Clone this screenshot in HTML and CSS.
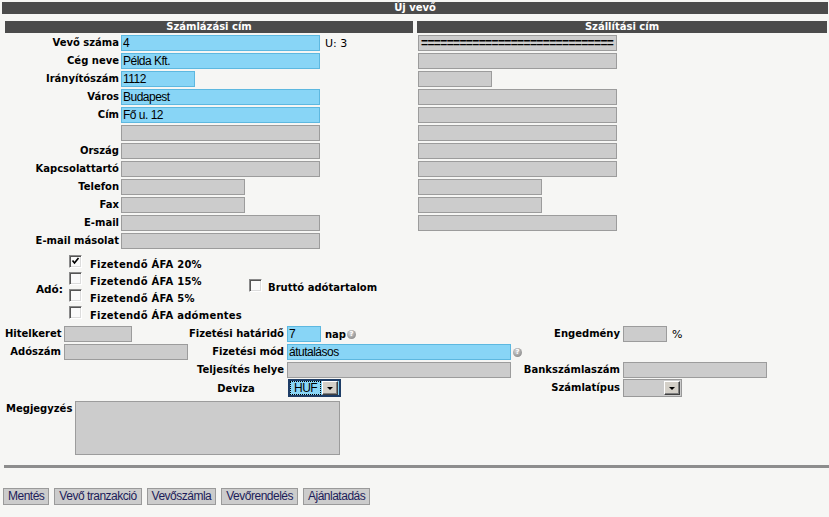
FILE: index.html
```html
<!DOCTYPE html>
<html lang="hu">
<head>
<meta charset="utf-8">
<title>Új vevő</title>
<link rel="stylesheet" href="styles.css">
</head>
<body>
<div class="titlebar">Új vevő</div>

<div class="addr">
  <div class="col">
    <div class="sechead">Számlázási cím</div>
    <div class="left">
      <label class="lbl">Vevő száma</label>
      <div class="fld"><input class="in blue w199" value="4"><span class="note">U: 3</span></div>
      <label class="lbl">Cég neve</label>
      <div class="fld"><input class="in blue w199" value="Példa Kft."></div>
      <label class="lbl">Irányítószám</label>
      <div class="fld"><input class="in blue w74" value="1112"></div>
      <label class="lbl">Város</label>
      <div class="fld"><input class="in blue w199" value="Budapest"></div>
      <label class="lbl">Cím</label>
      <div class="fld"><input class="in blue w199" value="Fő u. 12"></div>
      <label class="lbl"></label>
      <div class="fld"><input class="in w199" value=""></div>
      <label class="lbl">Ország</label>
      <div class="fld"><input class="in w199" value=""></div>
      <label class="lbl">Kapcsolattartó</label>
      <div class="fld"><input class="in w199" value=""></div>
      <label class="lbl">Telefon</label>
      <div class="fld"><input class="in w124" value=""></div>
      <label class="lbl">Fax</label>
      <div class="fld"><input class="in w124" value=""></div>
      <label class="lbl">E-mail</label>
      <div class="fld"><input class="in w199" value=""></div>
      <label class="lbl">E-mail másolat</label>
      <div class="fld"><input class="in w199" value=""></div>
    </div>
  </div>
  <div class="col">
    <div class="sechead">Szállítási cím</div>
    <div class="right">
      <input class="in w199 eq" value="==============================">
      <input class="in w199" value="">
      <input class="in w74" value="">
      <input class="in w199" value="">
      <input class="in w199" value="">
      <input class="in w199" value="">
      <input class="in w199" value="">
      <input class="in w199" value="">
      <input class="in w124" value="">
      <input class="in w124" value="">
      <input class="in w199" value="">
    </div>
  </div>
</div>

<div class="tax">
  <div class="ado">Adó:</div>
  <div class="cbcol">
    <div class="cbrow"><span class="cb"><svg width="11" height="11" viewBox="0 0 11 11"><path d="M2.5 4.5 L4.5 7 L8.5 2" fill="none" stroke="#000" stroke-width="1.7"/></svg></span><span class="cbtext">Fizetendő ÁFA 20%</span></div>
    <div class="cbrow"><span class="cb"></span><span class="cbtext">Fizetendő ÁFA 15%</span></div>
    <div class="cbrow"><span class="cb"></span><span class="cbtext">Fizetendő ÁFA 5%</span></div>
    <div class="cbrow"><span class="cb"></span><span class="cbtext">Fizetendő ÁFA adómentes</span></div>
  </div>
  <div class="brutto"><span class="cb"></span><span class="btext">Bruttó adótartalom</span></div>
</div>

<div class="terms">
  <label class="tl">Hitelkeret</label>
  <div class="fld"><input class="in w68" value=""></div>
  <label class="tl">Fizetési határidő</label>
  <div class="fld"><input class="in blue w34" value="7"><span class="nap">nap</span><span class="help">?</span></div>
  <label class="tl">Engedmény</label>
  <div class="fld"><input class="in w44" value=""><span class="pct">%</span></div>

  <label class="tl">Adószám</label>
  <div class="fld"><input class="in w124" value=""></div>
  <label class="tl">Fizetési mód</label>
  <div class="fld"><input class="in blue w224" value="átutalásos"><span class="help help2">?</span></div>
  <div></div>
  <div></div>

  <div></div>
  <div></div>
  <label class="tl">Teljesítés helye</label>
  <div class="fld"><input class="in w224" value=""></div>
  <label class="tl">Bankszámlaszám</label>
  <div class="fld"><input class="in w144" value=""></div>

  <div></div>
  <div></div>
  <label class="tl center">Deviza</label>
  <div class="fld">
    <div class="sel focus w53"><span class="val"><span class="dot">HUF</span></span><span class="arrow"><i></i></span></div>
  </div>
  <label class="tl">Számlatípus</label>
  <div class="fld">
    <div class="sel w59"><span class="val"></span><span class="arrow"><i></i></span></div>
  </div>
</div>

<div class="memo">
  <label class="mlbl">Megjegyzés</label>
  <textarea class="ta"></textarea>
</div>

<div class="rule"></div>

<div class="buttons">
  <button class="btn">Mentés</button>
  <button class="btn">Vevő tranzakció</button>
  <button class="btn">Vevőszámla</button>
  <button class="btn">Vevőrendelés</button>
  <button class="btn">Ajánlatadás</button>
</div>
</body>
</html>
```

FILE: styles.css
```css
* { box-sizing: border-box; }

body {
  margin: 0;
  width: 829px;
  height: 517px;
  overflow: hidden;
  background: #f6f6f4;
  font-family: "DejaVu Sans", Verdana, sans-serif;
  font-size: 10px;
  color: #000;
}

.titlebar {
  margin: 2px 1px 0 2px;
  height: 12px;
  line-height: 12px;
  background: #4b4b4b;
  color: #fff;
  font-weight: bold;
  text-align: center;
}

.addr {
  display: grid;
  grid-template-columns: 408px 410px;
  column-gap: 4px;
  margin: 7px 0 0 5px;
}

.sechead {
  height: 12px;
  line-height: 12px;
  margin-bottom: 2px;
  background: #4b4b4b;
  color: #fff;
  font-weight: bold;
  text-align: center;
}

.left {
  display: grid;
  grid-template-columns: 116px auto;
  grid-auto-rows: 16px;
  row-gap: 2px;
}

.lbl {
  font-weight: bold;
  text-align: right;
  padding-right: 2px;
  line-height: 16px;
  white-space: nowrap;
}

.fld {
  display: flex;
  align-items: center;
  height: 16px;
}

.right {
  display: flex;
  flex-direction: column;
  gap: 2px;
  padding-left: 1px;
}

.in {
  display: block;
  height: 16px;
  margin: 0;
  padding: 0 1px;
  border: 1px solid #9c9c9c;
  background: #cccccc;
  color: #000;
  font-family: "Liberation Sans", Arial, sans-serif;
  font-size: 12px;
  letter-spacing: -0.5px;
  outline: none;
}

.in.eq {
  padding-left: 2px;
  letter-spacing: -0.6px;
  font-weight: bold;
}

.in.blue {
  background: #88d5f6;
  border-color: #5db8e0;
}

.w34 { width: 34px; }
.w44 { width: 44px; }
.w68 { width: 68px; }
.w74 { width: 74px; }
.w124 { width: 124px; }
.w144 { width: 144px; }
.w199 { width: 199px; }
.w224 { width: 224px; }
.w53 { width: 53px; }
.w59 { width: 59px; }

.note {
  margin-left: 5px;
  font-size: 11px;
}

/* tax */
.tax {
  display: flex;
  align-items: center;
  margin: 6px 0 0 5px;
  height: 68px;
}

.ado {
  width: 58px;
  text-align: right;
  font-weight: bold;
  font-size: 10.5px;
}

.cbcol {
  margin-left: 6px;
  display: flex;
  flex-direction: column;
}

.cbrow {
  display: flex;
  align-items: flex-start;
  height: 17px;
}

.cb {
  display: block;
  flex: none;
  width: 13px;
  height: 13px;
  border: 1px solid;
  border-color: #8a8a8a #ffffff #ffffff #8a8a8a;
  box-shadow: inset 1px 1px 0 #555, inset -1px -1px 0 #dcdcdc;
  background: #fafafa;
}

.cb svg { display: block; margin: 0; }

.cbtext {
  margin: 4px 0 0 8px;
  line-height: 12px;
  font-weight: bold;
  letter-spacing: 0.25px;
  white-space: nowrap;
}

.brutto {
  display: flex;
  align-items: flex-start;
  align-self: flex-start;
  margin: 24px 0 0 7px;
}

.btext {
  margin: 3px 0 0 6px;
  line-height: 12px;
  font-weight: bold;
  white-space: nowrap;
}

/* terms grid */
.terms {
  display: grid;
  grid-template-columns: 59px 124px 99px 235px 101px auto;
  grid-template-rows: 16px 16px 16px 18px;
  row-gap: 2px;
  margin: 3px 0 0 5px;
}

.tl {
  font-weight: bold;
  text-align: right;
  padding-right: 3px;
  line-height: 16px;
  white-space: nowrap;
}

.tl.center {
  text-align: center;
  line-height: 18px;
}

.nap {
  margin-left: 4px;
  font-weight: bold;
}

.pct {
  margin-left: 5px;
  font-size: 11px;
}

.help {
  display: inline-block;
  width: 9px;
  height: 9px;
  margin-left: 1px;
  border-radius: 50%;
  background: radial-gradient(circle at 40% 35%, #d6d6d6, #8a8a8a 80%);
  color: #fff;
  font-size: 7px;
  font-weight: bold;
  line-height: 9px;
  text-align: center;
}

.help2 { margin-left: 2px; }

.sel {
  display: flex;
  height: 18px;
  padding: 1px;
  border: 1px solid #999;
  background: #cccccc;
}

.sel.focus {
  margin-left: 1px;
  border: 2px solid #1e3d66;
  padding: 0;
  background: #88d5f6;
}

.val {
  flex: 1;
  display: flex;
  align-items: center;
  padding: 1px 2px 1px 1px;
  font-family: "Liberation Sans", Arial, sans-serif;
  font-size: 12px;
  letter-spacing: -0.5px;
}

.dot {
  display: block;
  width: 100%;
  height: 12px;
  line-height: 12px;
  padding-left: 3px;
  outline: 1px dotted #000;
}

.arrow {
  flex: none;
  width: 16px;
  height: 14px;
  display: flex;
  align-items: center;
  justify-content: center;
  background: #d4d0c8;
  border-top: 1px solid #fff;
  border-left: 1px solid #fff;
  border-right: 1px solid #404040;
  border-bottom: 1px solid #404040;
  box-shadow: inset -1px -1px 0 #808080;
}

.sel.focus .arrow {
  margin-right: 1px;
}

.arrow i {
  display: block;
  width: 0;
  height: 0;
  border-left: 3px solid transparent;
  border-right: 3px solid transparent;
  border-top: 3px solid #000;
  margin-top: 1px;
}

/* memo */
.memo {
  display: flex;
  align-items: flex-start;
  margin: 3px 0 0 6px;
}

.mlbl {
  font-weight: bold;
  line-height: 12px;
  margin-top: 2px;
}

.ta {
  display: block;
  width: 265px;
  height: 54px;
  margin: 0 0 0 3px;
  border: 1px solid #9c9c9c;
  background: #cccccc;
  resize: none;
  outline: none;
}

.rule {
  height: 3px;
  margin: 10px 0 0 4px;
  background: #8d8d8d;
}

.buttons {
  display: flex;
  gap: 5px;
  margin: 20px 0 0 3px;
}

.btn {
  height: 17px;
  margin: 0;
  padding: 0 4px;
  border: 1px solid #9a9a9a;
  background: #cccccc;
  color: #1c1c5a;
  font-family: "Liberation Sans", Arial, sans-serif;
  font-size: 12px;
  letter-spacing: -0.5px;
  line-height: 15px;
}
```
